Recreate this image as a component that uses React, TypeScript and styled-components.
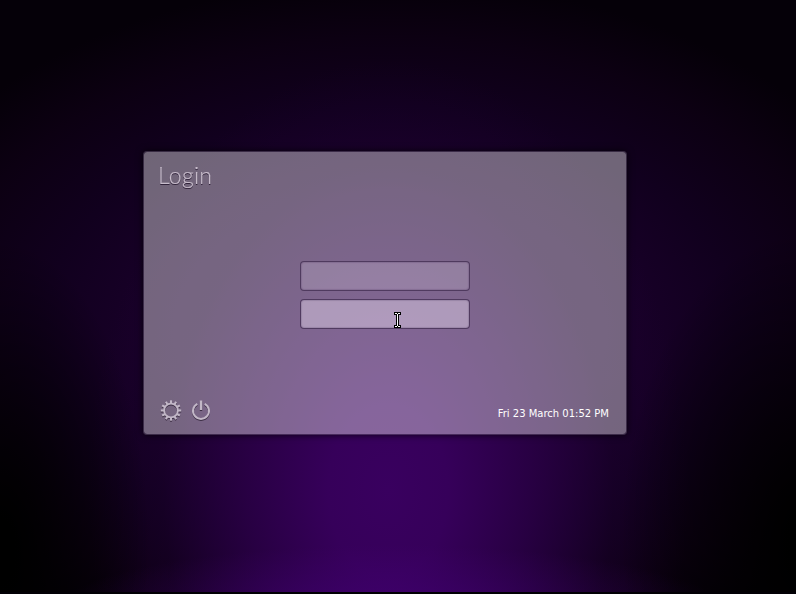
import React from "react";
import styled, { createGlobalStyle, css } from "styled-components";

const GlobalStyle = createGlobalStyle`
  * { box-sizing: border-box; }
  body { margin: 0; background: #000; overflow: hidden; }
`;

const Screen = styled.main`
  width: 796px;
  height: 594px;
  padding: 151px 0 0 143px;
  border-bottom: 2px solid #020005;
  background:
    radial-gradient(ellipse 340px 70px at 390px 615px, rgba(76, 0, 134, 0.5), rgba(76, 0, 134, 0) 100%),
    radial-gradient(ellipse 150px 310px at 0 550px, #000 10%, rgba(0, 0, 0, 0) 100%),
    radial-gradient(ellipse 190px 310px at 810px 540px, #000 10%, rgba(0, 0, 0, 0) 100%),
    radial-gradient(ellipse 300px 430px at 388px 490px, #39005f 0%, #36005a 20%, rgba(45, 0, 75, 0.82) 46%, rgba(30, 0, 50, 0.38) 75%, rgba(20, 0, 35, 0) 100%),
    radial-gradient(ellipse 540px 350px at 390px 330px, #1c0030 0%, #1a002b 40%, #11001e 64%, #0c0012 84%, #050008 100%);
`;

const Panel = styled.section`
  width: 484px;
  height: 284px;
  border: 1px solid rgba(90, 78, 98, 0.55);
  border-radius: 4px;
  background: rgba(255, 252, 255, 0.4);
  background-clip: padding-box;
  box-shadow: 0 0 7px rgba(0, 0, 0, 0.75);
  display: flex;
  flex-direction: column;
  justify-content: space-between;
  padding: 8px 17px 11px 15px;
`;

const Title = styled.h1`
  margin: 0 0 1px -1px;
  height: 30px;
  font: 300 23px/31px Lato, "Open Sans", sans-serif;
  letter-spacing: 0.3px;
  color: #c8bdcc;
  -webkit-text-stroke: 0.2px #c8bdcc;
  filter: drop-shadow(0 1px 0.5px #30233a);
`;

const Fields = styled.form`
  display: flex;
  flex-direction: column;
  align-items: center;
  gap: 8px;
  margin-left: 2px;
`;

const Field = styled.input<{ $active?: boolean }>`
  width: 170px;
  height: 30px;
  padding: 4px 8px;
  border: 1px solid rgba(56, 36, 70, 0.65);
  border-radius: 4px;
  outline: none;
  color: #fff;
  font: 12px "DejaVu Sans", sans-serif;
  background: rgba(250, 240, 255, 0.19);
  background-clip: padding-box;
  box-shadow: inset 0 0 1px 1px rgba(60, 35, 75, 0.18);
  ${({ $active }) => $active && css`background-color: rgba(250, 240, 255, 0.39);`}
`;

const Footer = styled.footer`
  display: flex;
  align-items: center;
  justify-content: space-between;
  height: 24px;
`;

const Actions = styled.div`
  display: flex;
  gap: 6px;
`;

const IconButton = styled.button`
  width: 24px;
  height: 24px;
  padding: 0;
  border: 0;
  background: none;
  svg {
    display: block;
    filter: drop-shadow(0 1px 0.5px rgba(45, 32, 52, 0.8));
  }
`;

const Clock = styled.time`
  font: 10px/14px "DejaVu Sans", sans-serif;
  color: #fff;
  margin-top: 5px;
`;

const Pointer = styled.svg`
  position: absolute;
  left: 393px;
  top: 312px;
  pointer-events: none;
`;

const teeth = Array.from({ length: 12 }, (_, i) => i * 30);

function GearIcon() {
  return (
    <svg width="24" height="24" viewBox="0 0 24 24" fill="none" stroke="#c2b7c7">
      <circle cx="12" cy="11.5" r="6.9" strokeWidth="1.8" />
      {teeth.map((angle) => (
        <path key={angle} d="M12 4.5V1.3" strokeWidth="2.1" transform={`rotate(${angle} 12 11.5)`} />
      ))}
    </svg>
  );
}

function PowerIcon() {
  return (
    <svg width="24" height="24" viewBox="0 0 24 24" fill="none" stroke="#c2b7c7">
      <path d="M8.3 4.8A8 8 0 1 0 15.7 4.8" strokeWidth="2" />
      <path d="M12 1.5V11" strokeWidth="2.4" />
    </svg>
  );
}

export default function App() {
  return (
    <>
      <GlobalStyle />
      <Screen>
        <Panel>
          <Title>Login</Title>
          <Fields>
            <Field type="text" aria-label="Username" />
            <Field type="password" aria-label="Password" $active />
          </Fields>
          <Footer>
            <Actions>
              <IconButton aria-label="Session settings"><GearIcon /></IconButton>
              <IconButton aria-label="Power"><PowerIcon /></IconButton>
            </Actions>
            <Clock>Fri 23 March 01:52 PM</Clock>
          </Footer>
        </Panel>
        <Pointer width="9" height="17" viewBox="0 0 9 17">
          <path d="M1 0H8V3H6V13H8V16H1V13H3V3H1Z" fill="#000" />
          <path d="M2 1.5H4M5 1.5H7M4.5 2V14M2 14.5H4M5 14.5H7" stroke="#fff" fill="none" />
        </Pointer>
      </Screen>
    </>
  );
}
